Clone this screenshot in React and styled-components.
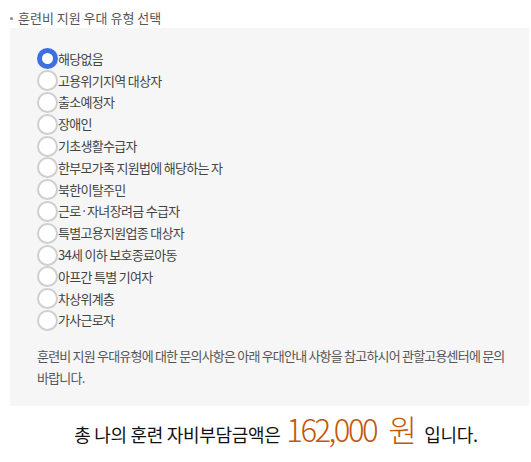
import React, { useState } from "react";
import styled, { createGlobalStyle } from "styled-components";

const GlobalStyle = createGlobalStyle`
  body {
    margin: 0;
    background: #fff;
    font-family: "Noto Sans CJK KR", "Noto Sans", sans-serif;
  }
`;

const TYPES = [
  "해당없음",
  "고용위기지역 대상자",
  "출소예정자",
  "장애인",
  "기초생활수급자",
  "한부모가족 지원법에 해당하는 자",
  "북한이탈주민",
  "근로·자녀장려금 수급자",
  "특별고용지원업종 대상자",
  "34세 이하 보호종료아동",
  "아프간 특별 기여자",
  "차상위계층",
  "가사근로자",
];

const App = () => {
  const [selected, setSelected] = useState(0);

  return (
    <Wrap>
      <GlobalStyle />
      <Title>훈련비 지원 우대 유형 선택</Title>
      <Panel>
        <RadioList>
          {TYPES.map((label, i) => (
            <RadioRow key={label} onClick={() => setSelected(i)}>
              <Circle $checked={selected === i} />
              <Label>{label}</Label>
            </RadioRow>
          ))}
        </RadioList>
        <Note>
          훈련비 지원 우대유형에 대한 문의사항은 아래 우대안내 사항을 참고하시어 관할고용센터에 문의
          바랍니다.
        </Note>
      </Panel>
      <Total>
        총 나의 훈련 자비부담금액은 <Amount>162,000 원</Amount> 입니다.
      </Total>
    </Wrap>
  );
};

const Wrap = styled.div`
  padding: 8px 2px 0 10px;
`;

const Title = styled.h3`
  position: relative;
  margin: 0;
  padding-left: 8px;
  font-size: 13px;
  font-weight: 400;
  line-height: 20px;
  color: #555;
  &::before {
    content: "";
    position: absolute;
    left: 0;
    top: 9px;
    width: 3px;
    height: 3px;
    border-radius: 50%;
    background: #888;
  }
`;

const Panel = styled.div`
  background: #f6f6f6;
  padding: 20px 20px 17px 27px;
`;

const RadioList = styled.ul`
  list-style: none;
  margin: 0;
  padding: 0;
`;

const RadioRow = styled.li`
  display: flex;
  align-items: center;
  height: 21.8px;
  cursor: pointer;
`;

const Circle = styled.span`
  box-sizing: border-box;
  flex: none;
  width: 21px;
  height: 21px;
  border-radius: 50%;
  background: #fff;
  border: ${(p) => (p.$checked ? "5px solid #3d6fe0" : "2.5px solid #cfcfcf")};
`;

const Label = styled.span`
  font-size: 13px;
  color: #444;
  letter-spacing: -0.7px;
  line-height: 20px;
`;

const Note = styled.p`
  margin: 14px 0 0;
  font-size: 13px;
  line-height: 22px;
  color: #555;
  letter-spacing: -0.8px;
`;

const Total = styled.div`
  margin: 1px 0 0 13px;
  text-align: center;
  font-size: 18px;
  color: #111;
  letter-spacing: -0.3px;
  line-height: 44px;
`;

const Amount = styled.span`
  font-size: 31px;
  font-weight: 300;
  color: #c4560a;
  letter-spacing: -2.5px;
  word-spacing: 8px;
  margin: 0 6px 0 2px;
`;

export default App;
